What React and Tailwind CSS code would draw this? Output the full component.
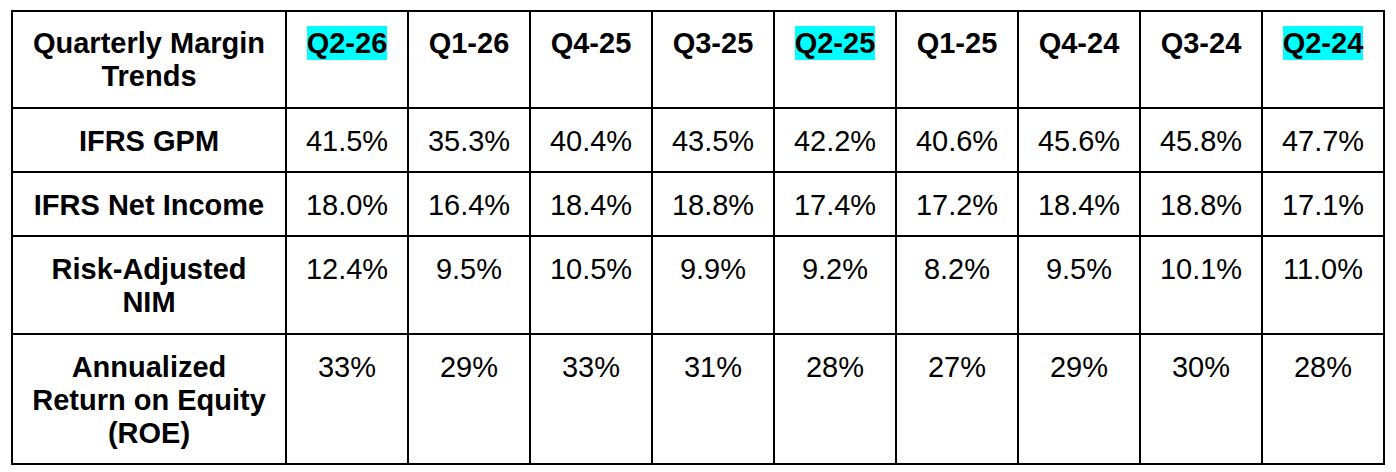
import React from "react";

const quarters = [
  { label: "Q2-26", hl: true },
  { label: "Q1-26" },
  { label: "Q4-25" },
  { label: "Q3-25" },
  { label: "Q2-25", hl: true },
  { label: "Q1-25" },
  { label: "Q4-24" },
  { label: "Q3-24" },
  { label: "Q2-24", hl: true },
];

const rows = [
  {
    name: ["IFRS GPM"],
    h: "h-[64px]",
    values: ["41.5%", "35.3%", "40.4%", "43.5%", "42.2%", "40.6%", "45.6%", "45.8%", "47.7%"],
  },
  {
    name: ["IFRS Net Income"],
    h: "h-[64px]",
    values: ["18.0%", "16.4%", "18.4%", "18.8%", "17.4%", "17.2%", "18.4%", "18.8%", "17.1%"],
  },
  {
    name: ["Risk-Adjusted", "NIM"],
    h: "h-[98px]",
    values: ["12.4%", "9.5%", "10.5%", "9.9%", "9.2%", "8.2%", "9.5%", "10.1%", "11.0%"],
  },
  {
    name: ["Annualized", "Return on Equity", "(ROE)"],
    h: "h-[130px]",
    values: ["33%", "29%", "33%", "31%", "28%", "27%", "29%", "30%", "28%"],
  },
];

const cell = "border-2 border-black align-top text-center px-1";

export default function App() {
  return (
    <div
      className="w-[1396px] h-[472px] bg-white text-black text-[29px] leading-[33px] pt-[10px] pl-[11px]"
      style={{ fontFamily: '"Liberation Sans", Arial, sans-serif' }}
    >
      <table className="table-fixed border-collapse w-[1374px]">
        <colgroup>
          <col className="w-[274px]" />
          {quarters.map((q) => (
            <col key={q.label} />
          ))}
        </colgroup>
        <thead>
          <tr className="h-[97px]">
            <th className={`${cell} pt-[15px] font-bold`}>
              Quarterly Margin
              <br />
              Trends
            </th>
            {quarters.map((q) => (
              <th key={q.label} className={`${cell} pt-[15px] font-bold`}>
                <span className={q.hl ? "bg-[#00ffff] py-[1px]" : ""}>{q.label}</span>
              </th>
            ))}
          </tr>
        </thead>
        <tbody>
          {rows.map((r) => (
            <tr key={r.name[0]} className={r.h}>
              <td className={`${cell} pt-[16px] font-bold`}>
                {r.name.map((line, i) => (
                  <React.Fragment key={line}>
                    {i > 0 && <br />}
                    {line}
                  </React.Fragment>
                ))}
              </td>
              {r.values.map((v, i) => (
                <td key={i} className={`${cell} pt-[16px]`}>
                  {v}
                </td>
              ))}
            </tr>
          ))}
        </tbody>
      </table>
    </div>
  );
}
